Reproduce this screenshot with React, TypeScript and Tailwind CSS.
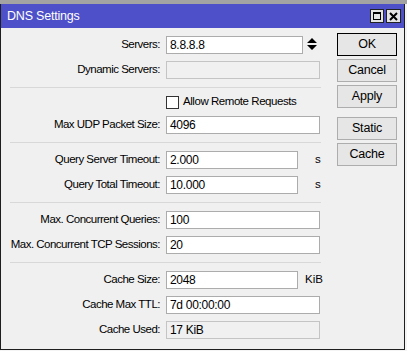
import React from 'react';

const font = { fontFamily: '"Liberation Sans", Arial, sans-serif' };

function Field({ label, value, width = 154, disabled, unit, unitGap = 0, extra }: {
  label: string;
  value: string;
  width?: number;
  disabled?: boolean;
  unit?: string;
  unitGap?: number;
  extra?: React.ReactNode;
}) {
  return (
    <div className="flex h-[25px] items-center">
      <div className="w-[159px] whitespace-nowrap text-right text-[11.5px] tracking-[-0.5px] text-black">{label}:</div>
      <div
        className={
          'ml-[6px] flex h-[18px] items-center border px-[3px] text-[12px] tracking-[-0.3px] text-black ' +
          (disabled ? 'border-[#c4c4c4] bg-[#f0f0f0]' : 'border-[#acacac] bg-white')
        }
        style={{ width }}
      >
        {value}
      </div>
      {extra}
      {unit && (
        <span className="text-[11.5px] text-black" style={{ marginLeft: unitGap }}>
          {unit}
        </span>
      )}
    </div>
  );
}

function Sep() {
  return <div className="ml-[9px] mt-[5px] mb-[4px] h-px w-[311px] bg-[#d8d8d8]" />;
}

function Btn({ children, primary, className = '' }: { children: React.ReactNode; primary?: boolean; className?: string }) {
  return (
    <div
      className={
        'flex h-[23px] w-[60px] items-center justify-center border bg-[#e6e6e6] text-[12.5px] tracking-[-0.2px] text-black ' +
        (primary ? 'border-black' : 'border-[#adadad]') +
        ' ' +
        className
      }
    >
      {children}
    </div>
  );
}

export default function App() {
  return (
    <div className="relative h-[351px] w-[407px] overflow-hidden bg-[#f4f4f4]" style={font}>
      <div className="h-[4px] bg-[#a3a3a3]" />
      <div className="flex h-[346px] w-[405px] flex-col border-x border-b border-[#1e1e1e] bg-[#f0f0f0]">
        {/* title bar */}
        <div className="flex h-[24px] items-center bg-[#4d50c8] pl-[6px] pr-[3px]">
          <span className="text-[12.5px] tracking-[-0.2px] text-white">DNS Settings</span>
          <div className="ml-auto flex gap-[2px]">
            <div className="flex h-[14px] w-[14px] items-center justify-center border border-[#222] bg-[#e4e4e4]">
              <div className="h-[8px] w-[8px] border border-black border-t-2" />
            </div>
            <div className="flex h-[14px] w-[15px] items-center justify-center border border-[#222] bg-[#e4e4e4]">
              <svg width="9" height="9" viewBox="0 0 9 9">
                <path d="M1 1 L8 8 M8 1 L1 8" stroke="#000" strokeWidth="2" />
              </svg>
            </div>
          </div>
        </div>

        <div className="flex flex-1">
          {/* form */}
          <div className="w-[336px] pt-[4px]">
            <Field
              label="Servers"
              value="8.8.8.8"
              width={137}
              extra={
                <svg className="ml-[4px]" width="10" height="13" viewBox="0 0 10 13">
                  <path d="M5 0 L10 5 L0 5 Z M0 7 L10 7 L5 12 Z" fill="#000" />
                </svg>
              }
            />
            <Field label="Dynamic Servers" value="" disabled />
            <Sep />
            <div className="flex h-[20px] items-center pl-[165px]">
              <div className="h-[13px] w-[13px] border border-[#333] bg-white" />
              <span className="ml-[4px] text-[11.5px] tracking-[-0.45px] text-black">Allow Remote Requests</span>
            </div>
            <Field label="Max UDP Packet Size" value="4096" />
            <Sep />
            <Field label="Query Server Timeout" value="2.000" width={132} unit="s" unitGap={17} />
            <Field label="Query Total Timeout" value="10.000" width={132} unit="s" unitGap={17} />
            <Sep />
            <Field label="Max. Concurrent Queries" value="100" />
            <Field label="Max. Concurrent TCP Sessions" value="20" />
            <Sep />
            <Field label="Cache Size" value="2048" width={132} unit="KiB" unitGap={7} />
            <Field label="Cache Max TTL" value="7d 00:00:00" />
            <Field label="Cache Used" value="17 KiB" disabled />
          </div>

          {/* buttons */}
          <div className="flex flex-col pt-[5px]">
            <Btn primary>OK</Btn>
            <Btn className="mt-[3px]">Cancel</Btn>
            <Btn className="mt-[3px]">Apply</Btn>
            <Btn className="mt-[9px]">Static</Btn>
            <Btn className="mt-[3px]">Cache</Btn>
          </div>
        </div>
      </div>
    </div>
  );
}
